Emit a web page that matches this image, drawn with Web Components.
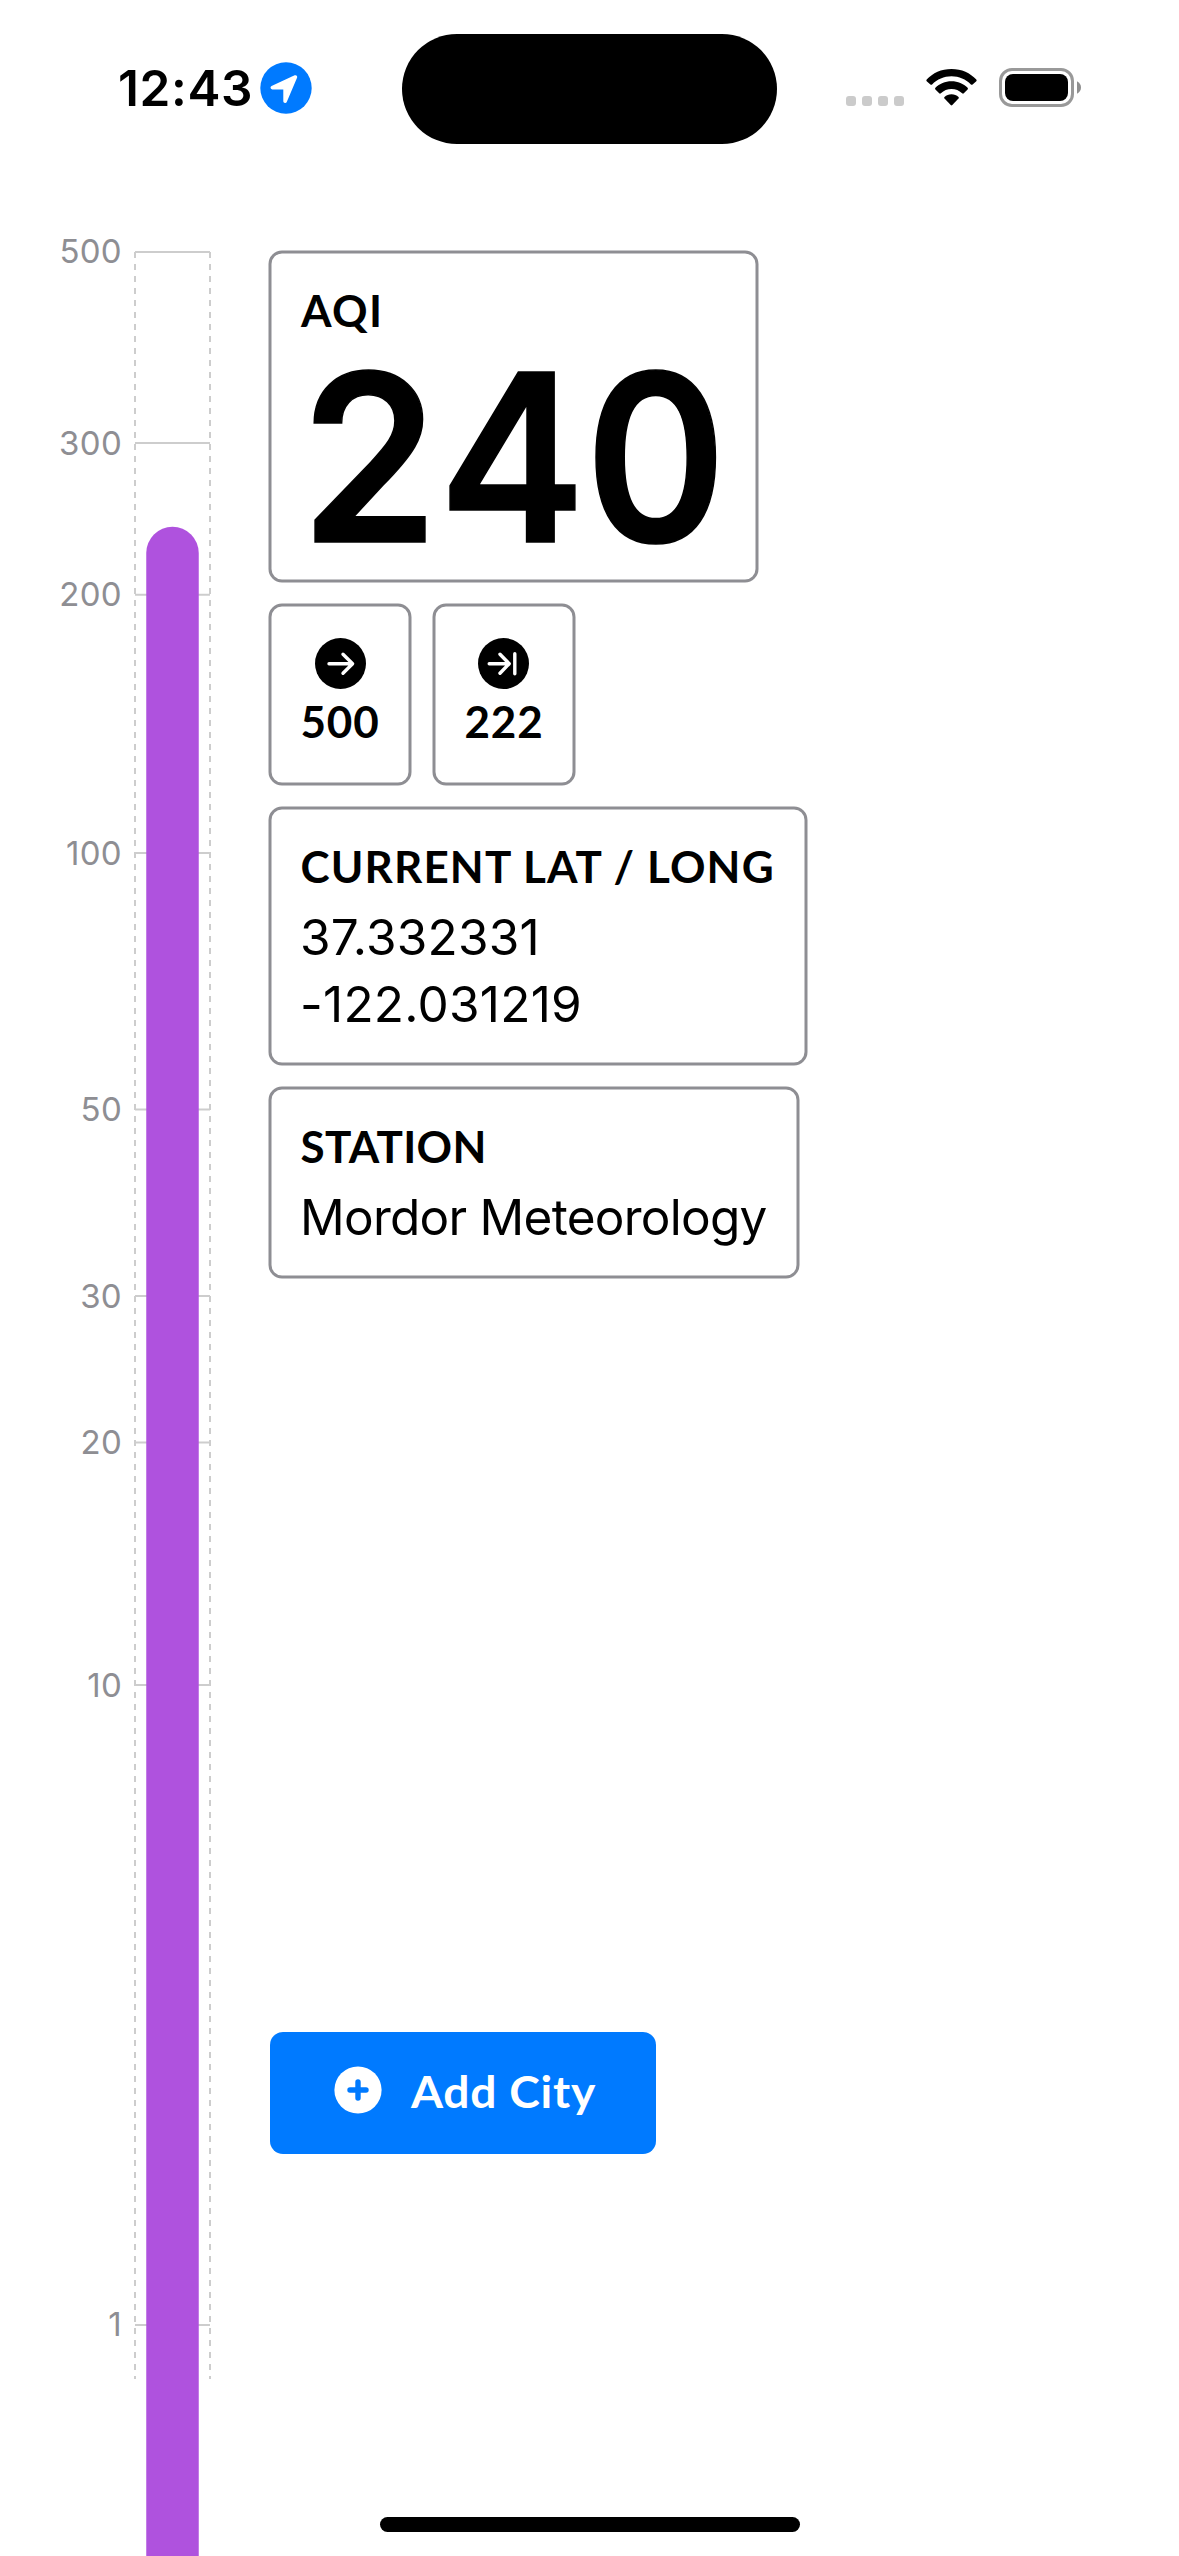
<!DOCTYPE html>
<html lang="en">
<head>
<meta charset="utf-8">
<title>AQI</title>
<style>
html,body{margin:0;background:#fff;color:#000}
</style>
</head>
<body>
<app-screen>
  <status-bar slot="status" time="12:43"></status-bar>
  <aqi-gauge slot="gauge"></aqi-gauge>
  <info-card class="aqi" heading="AQI" style="width:487px;height:329px"><big-value>240</big-value></info-card>
  <card-row>
    <mini-card icon="arrow">500</mini-card>
    <mini-card icon="arrow-end">222</mini-card>
  </card-row>
  <info-card heading="CURRENT LAT / LONG" style="width:536px;height:256px;--heading-spacing:1.14px">
    <text-line style="--spacing:.22px">37.332331</text-line>
    <text-line style="--spacing:.25px">-122.031219</text-line>
  </info-card>
  <info-card heading="STATION" style="width:528px;height:189px;--heading-spacing:.35px">
    <text-line style="--spacing:-.74px">Mordor Meteorology</text-line>
  </info-card>
  <add-button slot="action">Add City</add-button>
  <home-indicator slot="home"></home-indicator>
</app-screen>

<script>
const define = (name, markup) => customElements.define(name, class extends HTMLElement {
  constructor() {
    super();
    this.attachShadow({ mode: 'open' });
  }
  connectedCallback() {
    this.shadowRoot.innerHTML = typeof markup === 'function' ? markup(this) : markup;
  }
});

define('app-screen', `
<style>
:host{display:flex;flex-direction:column;width:1179px;height:2556px;overflow:hidden;background:#fff}
main{display:flex;flex:1;min-height:0}
.content{display:flex;flex-direction:column;align-items:flex-start;gap:24px;flex:1;padding-top:75px}
slot[name=action]{display:block;margin-top:731px}
slot[name=home]{display:block;margin-top:auto;padding:0 0 24px 110px}
</style>
<slot name="status"></slot>
<main>
  <slot name="gauge"></slot>
  <div class="content"><slot></slot><slot name="action"></slot><slot name="home"></slot></div>
</main>`);

define('status-bar', el => `
<style>
:host{display:flex;height:177px;flex:none;box-sizing:border-box;padding-top:33.5px;align-items:flex-start}
.left{display:flex;width:402px;height:109px;align-items:center;box-sizing:border-box;padding-left:118px}
.time{font:600 49.5px/60px Inter,sans-serif;letter-spacing:.62px;width:141.5px}
.island{width:375px;height:110.5px;border-radius:55.25px;background:#000}
.right{display:flex;flex:1;height:109px;align-items:center;padding-left:69px}
svg{display:block;flex:none}
</style>
<div class="left"><span class="time">${el.getAttribute('time')}</span>
<svg width="52" height="52" viewBox="0 0 52 52"><circle cx="26" cy="26" r="25.7" fill="#007aff"/><path d="M12.3 25.6 35.4 15 25.1 39.2V25.6Z" fill="#fff" stroke="#fff" stroke-width="3.6" stroke-linejoin="round"/></svg></div>
<div class="island"></div>
<div class="right">
<svg width="240" height="40" viewBox="0 0 240 40">
<g fill="#cbcbcb"><rect x="0" y="28" width="10" height="10" rx="3"/><rect x="16" y="28" width="10" height="10" rx="3"/><rect x="32" y="28" width="10" height="10" rx="3"/><rect x="48" y="28" width="10" height="10" rx="3"/></g>
<g transform="translate(80.3 1)">
<path d="M25.2 0C35.4 0 44 4 50 10.6Q50.8 11.5 50 12.3L46.3 15.5Q45.4 16.2 44.6 15.4C39.5 10.2 32.8 7.2 25.2 7.2S10.9 10.2 5.8 15.4Q5 16.2 4.1 15.5L.4 12.3Q-.4 11.5.4 10.6C6.4 4 15 0 25.2 0Z"/>
<path d="M25.2 12.3C31.6 12.3 37.2 14.7 41.3 18.8Q42.1 19.7 41.3 20.5L37.5 24.3Q36.7 25 35.8 24.2C32.9 21.5 29.3 20 25.2 20S17.5 21.5 14.6 24.2Q13.7 25 12.9 24.3L9.1 20.5Q8.3 19.7 9.1 18.8C13.2 14.7 18.8 12.3 25.2 12.3Z"/>
<path d="M25.2 25.2C27.9 25.2 30.4 26.2 32.2 27.9Q33 28.7 32.2 29.6L26 36Q25.2 36.8 24.4 36L18.2 29.6Q17.4 28.7 18.2 27.9C20 26.2 22.5 25.2 25.2 25.2Z"/>
</g>
<rect x="154.5" y="1.5" width="72" height="36" rx="11.5" fill="none" stroke="#999" stroke-width="3"/>
<rect x="159" y="6" width="63" height="27" rx="8"/>
<path d="M231 13.3Q235 15.5 235 19.5T231 25.7Z" fill="#8f8f8f"/>
</svg></div>`);

const ticks = [[500,252],[300,443],[200,594.7],[100,853],[50,1109.4],[30,1296],[20,1442.5],[10,1685],[1,2325]];
define('aqi-gauge', () => `
<style>
:host{display:block;width:270px;flex:none}
svg{display:block}
text{font:400 33px Inter,sans-serif;fill:#8e8e93;text-anchor:end;letter-spacing:.3px}
</style>
<svg width="270" height="2379" viewBox="0 177 270 2379">
<g stroke="#cdcdcd" stroke-width="2"><path d="M135 252V2379M210 252V2379" stroke-dasharray="6 6"/>
${ticks.map(([, y]) => `<path d="M135 ${y}H210"/>`).join('')}</g>
<rect x="146.25" y="526.7" width="52.5" height="2100" rx="26.25" fill="#af52de"/>
${ticks.map(([v, y]) => `<text x="122" y="${Math.round(y + (v === 500 || v === 1 ? 11 : 11.7))}">${v}</text>`).join('')}
</svg>`);

const frame = `<svg class="frame" width="100%" height="100%"><rect width="100%" height="100%" rx="12" fill="none" stroke="#8e8e93" stroke-width="3"/></svg>`;
const frameCss = `.frame{position:absolute;inset:0;overflow:visible}`;

define('info-card', el => `
<style>
:host{display:block;position:relative;box-sizing:border-box;padding:30px 30px 0}
h2{margin:0 0 9.5px .5px;font:700 44px/56px Lato,sans-serif;letter-spacing:var(--heading-spacing,1.4px);white-space:nowrap}
:host(.aqi) h2{margin:0 0 0 1px}
${frameCss}
</style>${frame}<h2>${el.getAttribute('heading')}</h2><slot></slot>`);

define('big-value', `
<style>
:host{display:block;font:600 233px/239px Inter,sans-serif;font-variant-numeric:tabular-nums;-webkit-text-stroke:1.5px #000;letter-spacing:.2px;transform:scaleX(.948);transform-origin:0 0;margin-left:-2px;white-space:nowrap}
</style><slot></slot>`);

define('text-line', `
<style>
:host{display:block;font:400 49.5px/67px Inter,sans-serif;letter-spacing:var(--spacing,0);white-space:nowrap}
</style><slot></slot>`);

define('card-row', `<style>:host{display:flex;gap:24px}</style><slot></slot>`);

const icons = {
  'arrow': '<path d="M14 25.7H37.3M28 16.3 37.6 25.7 28 35.2"/>',
  'arrow-end': '<path d="M11.2 25.7H31M22 16.3 31.2 25.7 22 35.2M36.8 15.8V35.8"/>'
};
define('mini-card', el => `
<style>
:host{display:flex;flex-direction:column;align-items:center;gap:3.5px;position:relative;box-sizing:border-box;width:140px;height:179px;padding-top:33px;font:700 44px/56px Lato,sans-serif;letter-spacing:.8px}
${frameCss}
.icon{display:block}
:host([icon=arrow-end]) .icon{margin-right:1px}
</style>${frame}
<svg class="icon" width="51" height="51" viewBox="0 0 51 51"><circle cx="25.5" cy="25.5" r="25.5"/><g fill="none" stroke="#fff" stroke-width="3.4" stroke-linecap="round" stroke-linejoin="round">${icons[el.getAttribute('icon')]}</g></svg>
<span><slot></slot></span>`);

define('add-button', `
<style>
:host{display:flex;align-items:center;gap:29px;box-sizing:border-box;width:386px;height:122px;border-radius:13px;background:#007aff;color:#fff;padding-left:63.5px;font:700 44px/56px Lato,sans-serif;letter-spacing:.7px;white-space:nowrap}
svg{display:block;margin-top:-6px}
span{display:block;margin-top:-5px;transform:scaleX(1.05);transform-origin:0 0}
</style>
<svg width="48" height="48" viewBox="0 0 48 48"><circle cx="24" cy="24" r="23.6" fill="#fff"/><path d="M24 16V32M16 24H32" stroke="#007aff" stroke-width="5.4" stroke-linecap="round"/></svg>
<span><slot></slot></span>`);

define('home-indicator', `<style>:host{display:block;width:420px;height:15px;border-radius:7.5px;background:#000}</style>`);
</script>
</body>
</html>
